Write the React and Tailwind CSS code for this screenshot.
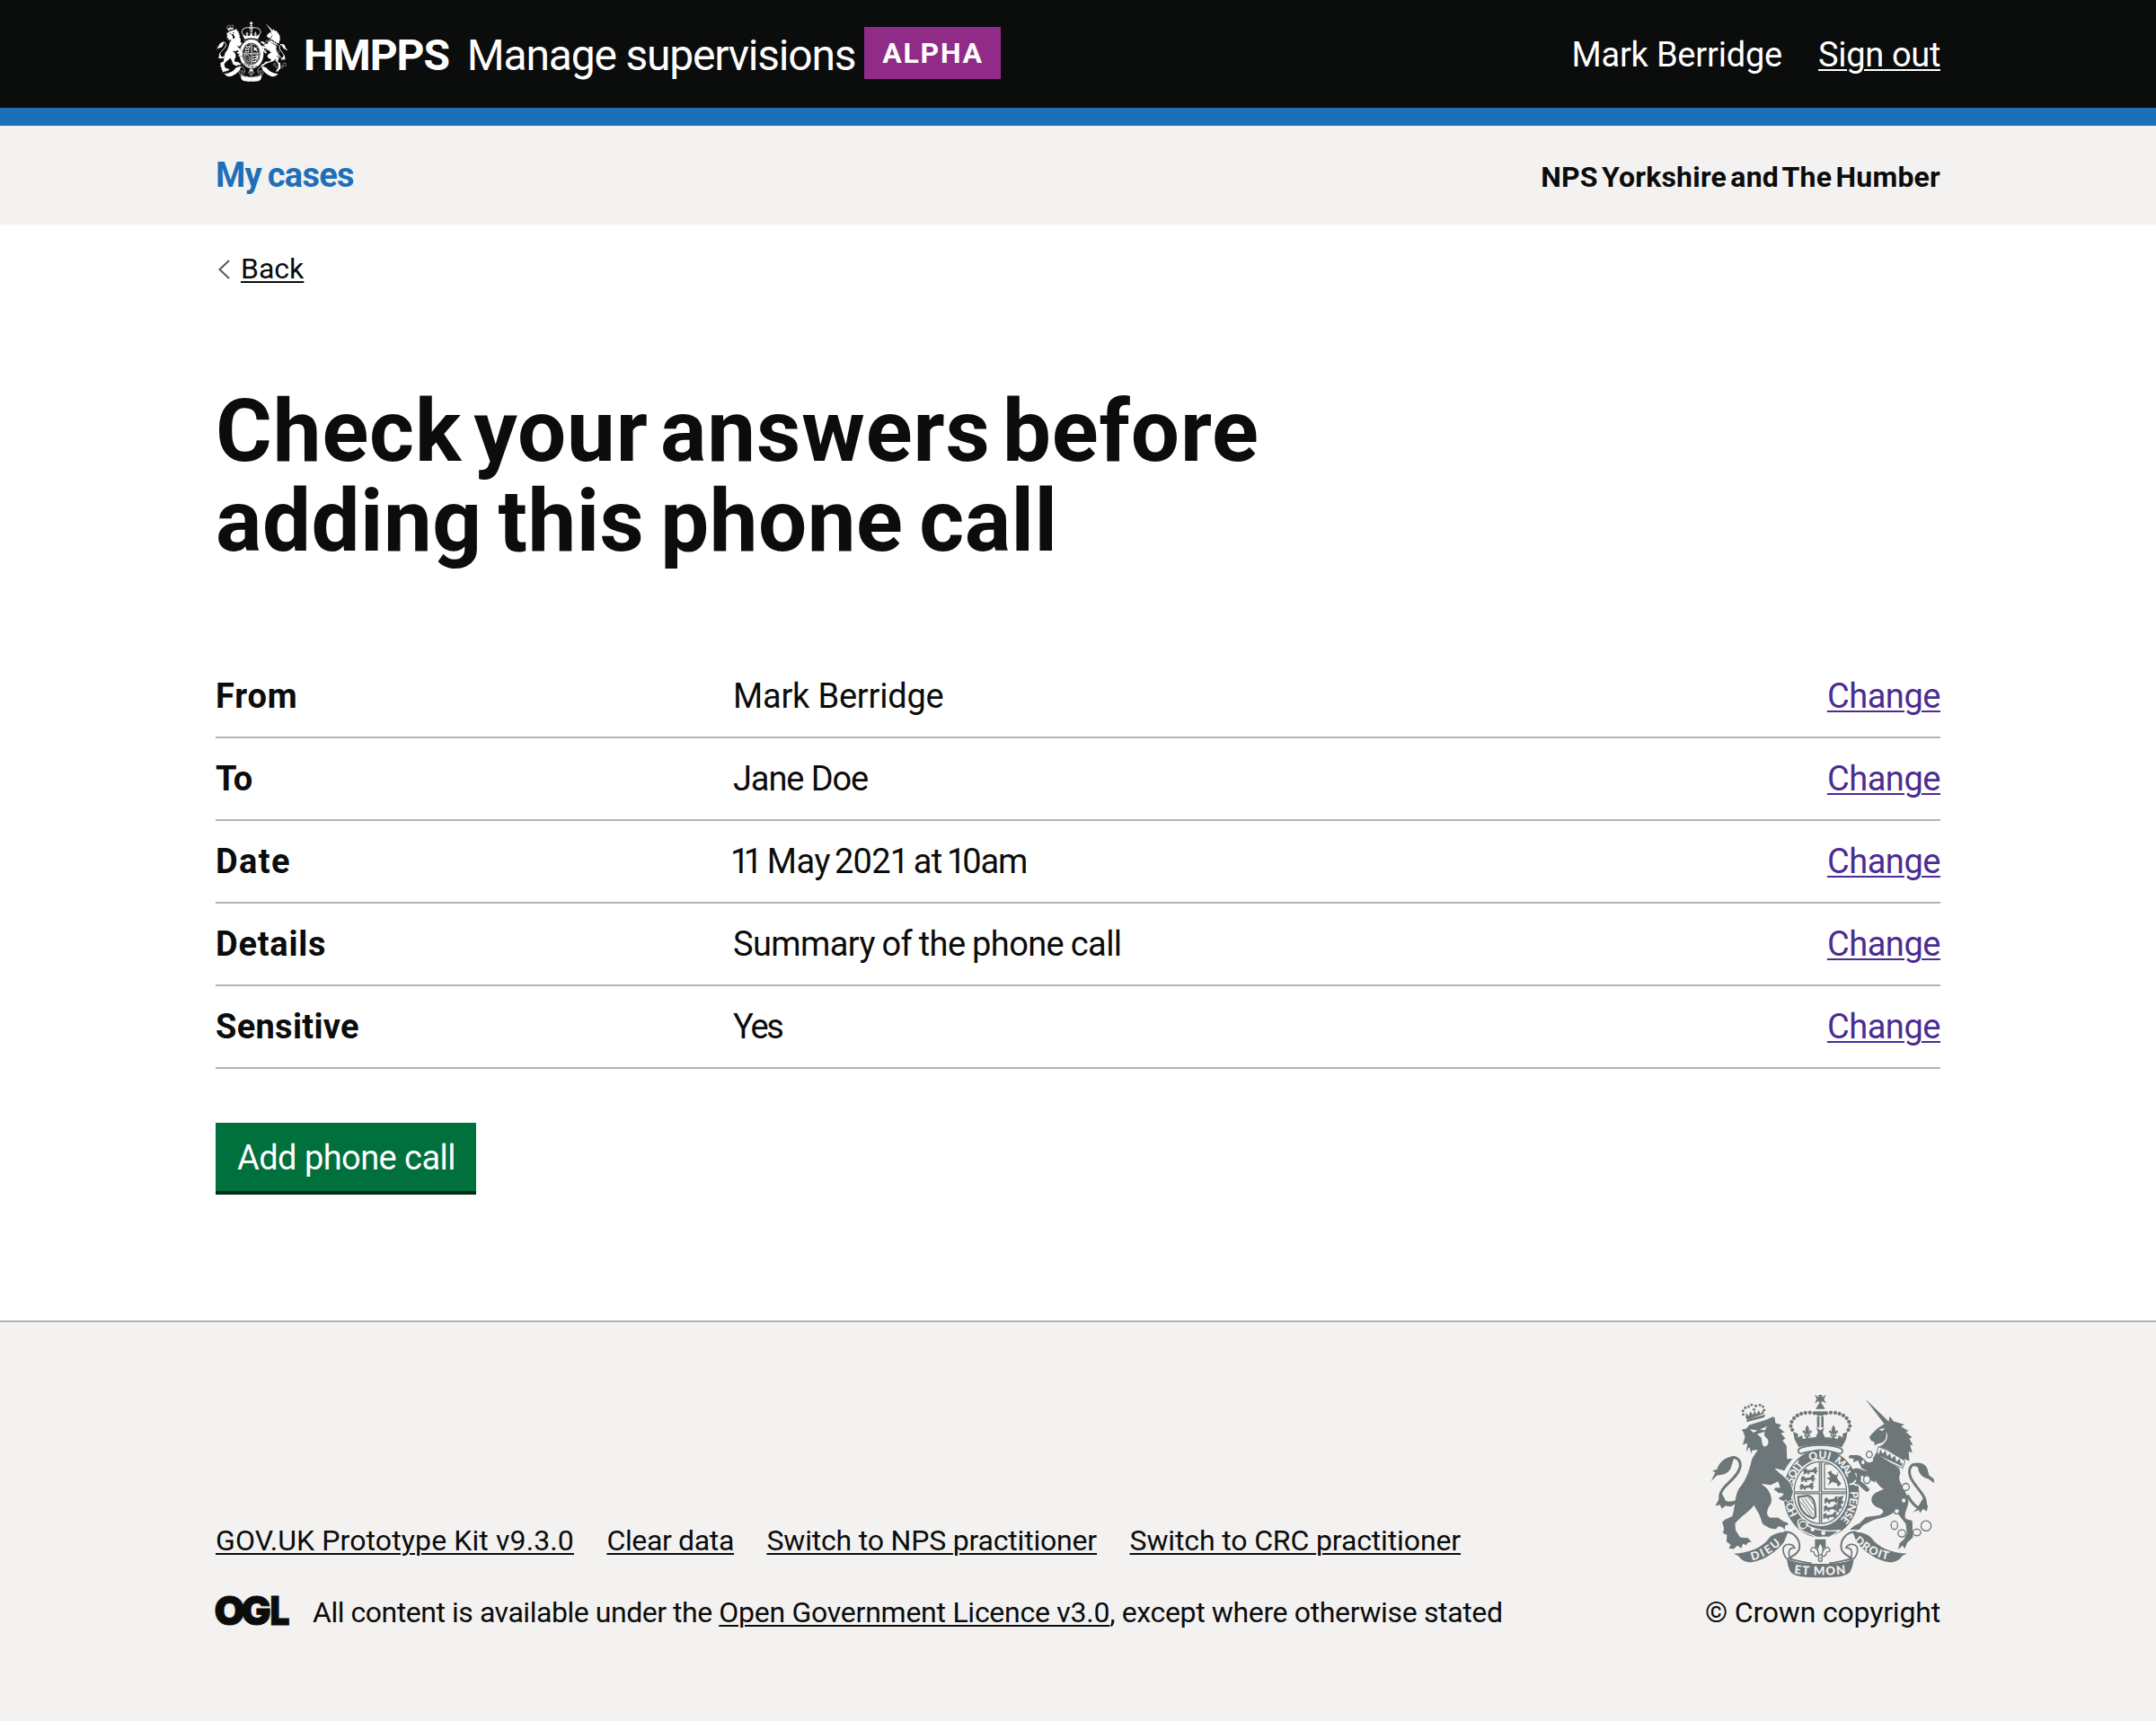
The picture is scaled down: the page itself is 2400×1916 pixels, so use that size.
const INK = "#0b0c0c";

const LION =
  "M143 152 L160 148 L170 136 L228 118 L250 108 L257 114 L259 130 L279 136 L271 147 L291 162 L278 166 L292 182 L283 190 L296 206 L298 250 L318 248 L300 272 L288 292 L258 284 C272 300 302 318 312 340 L318 362 L312 380 L314 392 L306 390 L300 398 L292 388 L286 394 L272 388 L266 380 L278 376 L284 368 L268 366 L252 354 L256 346 L272 346 L266 328 L242 340 L214 336 C240 352 250 380 244 400 C230 420 226 440 240 446 L266 446 L284 458 L300 464 L302 474 L292 474 L290 490 L280 480 L268 478 L258 488 L238 484 L214 470 C206 450 204 436 192 420 L186 408 C170 430 136 448 124 468 L126 490 L140 512 L166 514 L180 530 L166 532 L160 542 L150 536 L144 552 L130 542 L118 554 L100 552 L106 538 L92 528 L94 506 L80 500 L84 484 L78 462 L90 452 L112 442 C124 400 118 380 134 350 C160 320 168 290 178 250 L196 222 L180 224 L176 240 L170 214 L158 232 L162 200 L146 206 L154 178 L150 164 Z";

const UNICORN_HEAD =
  "M558 50 L637 126 L640 108 L654 126 L690 136 L678 142 L704 158 L694 160 L716 180 L706 182 L718 206 L708 204 L716 230 L704 226 L706 258 L692 252 L682 260 L652 240 L636 222 L604 210 C628 200 640 176 628 160 C632 186 622 196 602 200 L590 206 L588 194 L578 190 L572 178 L580 168 L600 148 L622 134 Z";

const UNICORN_BODY =
  "M598 226 L606 240 L672 282 L676 300 C662 322 692 350 702 384 C708 412 684 430 694 452 L716 458 L718 514 L700 530 L690 552 L684 540 L668 554 L674 532 L688 520 L698 500 L694 468 L660 425 C640 446 606 450 584 456 L552 472 L538 488 L506 488 L522 474 L540 466 L560 446 L606 440 C626 430 622 420 596 412 C574 400 574 376 594 364 L620 352 C600 340 590 320 578 296 C576 280 588 262 584 250 Z";

const PEARLS = [
  [388, 98], [373, 96], [358, 97], [344, 100], [331, 106], [320, 115], [312, 127], [309, 141], [314, 154],
];

const CHAIN = [
  [572, 236, 10, 11], [551, 262, 7, 9], [564, 320, 11, 13], [694, 345, 12, 12], [687, 390, 8, 9],
  [664, 426, 9, 9], [656, 473, 11, 14], [681, 500, 13, 12], [731, 497, 13, 11], [762, 475, 17, 17],
];

function Fleur({ x, y, s = 1 }) {
  return (
    <g transform={`translate(${x} ${y}) scale(${s})`}>
      <path d="M0 -22 C8 -12 8 0 3 10 L-3 10 C-8 0 -8 -12 0 -22 Z" />
      <path d="M4 8 C6 -8 18 -8 15 4 L11 2 C10 8 8 12 4 14 Z M-4 8 C-6 -8 -18 -8 -15 4 L-11 2 C-10 8 -8 12 -4 14 Z" />
      <path d="M-11 12 H11 V16 H4 V24 H-4 V16 H-11 Z" />
    </g>
  );
}

function Passant({ x, y }) {
  return (
    <path
      transform={`translate(${x} ${y})`}
      d="M0 10 L4 0 L12 -2 L14 5 L32 3 L40 -6 L48 -4 L44 2 L50 8 L44 12 L46 18 L38 16 L36 11 L20 13 L22 19 L14 18 L14 12 L6 18 L0 18 L4 12 Z"
    />
  );
}

function RibbonHalf({ paper }) {
  return (
    <g>
      <path d="M118 568 C165 566 215 548 236 516 C250 500 275 495 300 496 L286 530 C262 560 220 592 176 597 C156 598 142 588 134 576 Z" />
      <path d="M286 496 C318 492 342 520 338 550 C334 572 308 574 306 586 C330 590 350 598 378 600" fill="none" stroke="currentColor" strokeWidth="6" />
      <path d="M284 560 C280 534 312 530 322 548 C300 548 300 566 306 580 L298 586 C290 580 286 572 284 560 Z" fill={paper} stroke="currentColor" strokeWidth="5" />
      <path d="M296 586 C330 600 370 602 409 602 L409 648 C360 648 322 646 309 630 C302 618 298 604 296 586 Z" />
    </g>
  );
}

function Crest({ id, paper, motto, className }) {
  return (
    <svg viewBox="40 34 752 616" preserveAspectRatio="none" className={className} fill="currentColor" aria-hidden="true">
      <defs>
        <path id={`${id}-garter`} d="M411 482 A98 116 0 0 1 411 250 A98 116 0 0 1 411 482" />
        <path id={`${id}-left`} d="M180 591 C220 582 260 556 286 524" />
        <path id={`${id}-right`} d="M520 526 C548 558 600 586 650 590" />
        <path id={`${id}-base`} d="M320 634 Q408 646 498 634" />
        <clipPath id={`${id}-shield`}>
          <ellipse cx="408" cy="364" rx="86" ry="102" />
        </clipPath>
      </defs>

      {/* Royal crown */}
      <path d="M389 37 L404 45 L401 37 H415 L412 45 L427 37 L420 51 L427 65 L412 57 V66 H404 V57 L389 65 L396 51 Z" />
      <path d="M403 66 H413 L424 84 H392 Z" />
      <path d="M386 92 H430 C428 112 388 112 386 92 Z" />
      <path d="M397 108 H405 V146 H397 Z M411 108 H419 V146 H411 Z" />
      {PEARLS.map(([x, y]) => (
        <g key={x}>
          <circle cx={x} cy={y} r="6.3" />
          <circle cx={816 - x} cy={y} r="6.3" />
        </g>
      ))}
      <Fleur x={364} y={160} />
      <Fleur x={452} y={160} />
      <path d="M394 146 L406 154 H410 L422 146 L416 162 L424 180 H392 L400 162 Z" />
      <path d="M317 160 L334 168 L332 180 L346 172 L350 184 C380 176 436 176 466 184 L470 172 L484 180 L482 168 L499 160 L494 186 L480 212 C440 200 374 200 336 212 L322 186 Z" />
      <path d="M344 214 C376 202 440 202 472 214 C486 218 484 230 474 234 C440 220 376 220 342 234 C332 230 330 218 344 214 Z" fill={paper} stroke="currentColor" strokeWidth="5" />

      {/* Garter and shield */}
      <path d="M411 219 A127 148 0 0 1 411 515 A127 148 0 0 1 411 219 Z" />
      <ellipse cx="408" cy="364" rx="95" ry="112" fill={paper} />
      <ellipse cx="408" cy="364" rx="88" ry="104" fill="none" stroke="currentColor" strokeWidth="4" />
      <g clipPath={`url(#${id}-shield)`}>
        <path d="M403 258 H414 V470 H403 Z M318 359 H498 V369 H318 Z" />
        <path d="M408 258 V470 M318 364 H498" stroke={paper} strokeWidth="2" />
        <Passant x={350} y={284} />
        <Passant x={342} y={310} />
        <Passant x={338} y={336} />
        <path d="M422 268 H500 V352 H422 Z" fill="none" stroke="currentColor" strokeWidth="4" />
        <path d="M432 296 L444 290 L448 300 L462 306 L470 292 L464 316 L478 334 L468 344 L462 332 L448 328 L434 340 L440 322 L428 316 L442 312 Z" />
        <path d="M334 378 L366 374 C384 378 392 392 392 444 L384 450 C350 440 334 410 334 378 Z" fill="none" stroke="currentColor" strokeWidth="7" />
        <path d="M346 384 L384 440 M356 382 L386 424 M368 380 L388 406 M342 394 L376 442" stroke="currentColor" strokeWidth="3" />
        <Passant x={420} y={382} />
        <Passant x={418} y={408} />
        <Passant x={416} y={434} />
        <path d="M468 378 L486 374 L480 390 L488 396 L476 404 L482 414 L470 420 L472 430 L462 428 Z" />
      </g>
      <path d="M334 456 C352 444 372 458 364 474 C400 494 440 494 476 490 L440 512 L400 514 L352 494 C338 490 330 470 334 456 Z" stroke={paper} strokeWidth="4" />
      <circle cx="350" cy="472" r="12" fill="none" stroke={paper} strokeWidth="4" />
      <circle cx="382" cy="487" r="7" fill={paper} />
      <circle cx="418" cy="499" r="7" fill={paper} />
      {motto && (
        <g fill={paper} fontFamily="Lato, sans-serif" fontWeight="900" fontSize="36">
          <text><textPath href={`#${id}-garter`} startOffset="14%" textLength="46">HO</textPath></text>
          <text><textPath href={`#${id}-garter`} startOffset="29.5%" textLength="74">SOIT</textPath></text>
          <text><textPath href={`#${id}-garter`} startOffset="44.2%" textLength="68">QUI</textPath></text>
          <text><textPath href={`#${id}-garter`} startOffset="56.5%" textLength="70">MAL</textPath></text>
          <text><textPath href={`#${id}-garter`} startOffset="68.8%">Y</textPath></text>
          <text><textPath href={`#${id}-garter`} startOffset="74%" textLength="104">PENSE</textPath></text>
        </g>
      )}

      {/* Lion */}
      <path d={LION} stroke={paper} strokeWidth="3" />
      <path d="M172 152 L198 156 L184 163 Z M206 152 L230 142 L222 156 Z M196 168 L222 160 L220 172 L232 186 C238 200 230 210 220 210 C210 204 214 190 210 180 Z" fill={paper} />
      <path d="M160 128 L220 112 L224 102 L164 118 Z" />
      <g>
        {[[150, 102], [149, 90], [157, 80], [168, 76], [178, 70], [192, 74], [206, 71], [216, 76], [220, 88], [186, 86]].map(([x, y]) => (
          <circle key={x} cx={x} cy={y} r="4.5" />
        ))}
        <path d="M158 112 L160 96 L168 108 L174 92 L182 104 L188 90 L194 102 L202 88 L208 100 L218 86 L218 100 L162 120 Z" />
      </g>
      <path d="M132 392 C104 402 72 402 72 378 C72 340 132 320 140 276 C142 250 120 240 104 250" fill="none" stroke="currentColor" strokeWidth="9" />
      <path d="M122 244 C96 240 70 258 62 286 L46 292 L56 296 L42 326 L62 306 C84 304 104 300 110 276 L116 256 Z" />
      <path d="M76 362 L66 390 L56 408 L72 404 L78 418 L90 408 L110 410 L126 398 L92 392 Z" />

      {/* Unicorn */}
      <path d="M590 254 C560 280 556 240 532 238 L506 238 L502 248 L520 250 L518 262 L534 256 L546 282 L586 304 Z" />
      <path d="M590 288 C556 300 548 282 528 282 L508 288 L512 310 L518 296 L530 300 L528 326 L546 348 L564 362 L574 354 L560 338 L544 326 L544 306 L592 330 Z" />
      <path d={UNICORN_HEAD} />
      <path d="M604 152 L624 148 L616 158 Z" fill={paper} />
      <path d="M602 210 L640 226 L692 258 L684 282 L640 264 L596 238 Z" fill={paper} stroke="currentColor" strokeWidth="3" />
      <path d="M604 234 L610 218 L616 234 L626 224 L632 242 L642 232 L646 250 L658 240 L662 260 L674 250 L678 268 L684 262 L682 276 L602 238 Z" />
      <path d={UNICORN_BODY} />
      <path d="M700 372 C716 404 744 430 758 408 C772 376 716 340 708 306 C702 280 714 266 732 270" fill="none" stroke="currentColor" strokeWidth="9" />
      <path d="M712 272 C730 258 762 262 768 290 L772 306 L788 318 L790 332 L770 318 C748 312 738 300 734 278 Z" />
      <path d="M756 376 L768 410 L764 426 L752 418 L742 432 L738 422 L718 430 L732 416 Z" />
      {CHAIN.map(([x, y, rx, ry]) => (
        <ellipse key={x} cx={x} cy={y} rx={rx} ry={ry} fill={paper} stroke="currentColor" strokeWidth="4" />
      ))}

      {/* Ribbon */}
      <RibbonHalf paper={paper} />
      <g transform="translate(816 0) scale(-1 1)">
        <RibbonHalf paper={paper} />
      </g>
      <path d="M390 520 H426 V548 H390 Z" />
      <g fill={paper} stroke="currentColor" strokeWidth="4">
        <path d="M408 532 C420 546 418 562 412 572 H404 C398 562 396 546 408 532 Z" />
        <path d="M414 572 C414 548 440 536 440 560 L430 562 C428 574 422 578 414 578 Z M402 572 C402 548 376 536 376 560 L386 562 C388 574 394 578 402 578 Z" />
        <circle cx="408" cy="588" r="6" />
      </g>
      {motto && (
        <g fill={paper} fontFamily="Lato, sans-serif" fontWeight="900" fontSize="38">
          <text><textPath href={`#${id}-left`} textLength="112">DIEU</textPath></text>
          <text><textPath href={`#${id}-right`} textLength="132">DROIT</textPath></text>
          <text fontSize="40"><textPath href={`#${id}-base`} textLength="174">ET MON</textPath></text>
        </g>
      )}
    </svg>
  );
}

const LINK = "underline decoration-2 underline-offset-[3px]";

const ROWS = [
  { label: "From", labelClass: "tracking-[0.9px]", value: <span className="tracking-[-0.2px]">Mark Berridge</span> },
  { label: "To", labelClass: "tracking-[-0.5px]", value: <span className="tracking-[-1.1px]">Jane Doe</span> },
  {
    label: "Date",
    labelClass: "tracking-[1.4px]",
    value: (
      <span className="tracking-[-0.5px] [word-spacing:-3.8px]">
        <span className="ml-[-3px] tracking-[-6.5px]">1</span>1 May <span className="tracking-[-0.8px]">202</span>1 at <span className="tracking-[-4px]">1</span><span className="tracking-[-1.2px]">0am</span>
      </span>
    ),
  },
  { label: "Details", labelClass: "tracking-[0.75px]", value: <span className="tracking-[-0.6px] [word-spacing:-1.2px]">Summary of the phone call</span> },
  { label: "Sensitive", labelClass: "tracking-[0.3px]", value: <span className="tracking-[-2.2px]">Yes</span> },
];

function Header() {
  return (
    <header className="h-[140px] border-b-[20px] border-[#1d70b8] bg-[#0b0c0c] text-white">
      <div className="mx-auto flex h-[120px] w-[1920px] items-start justify-between">
        <div className="flex items-start">
          <Crest id="header-crest" paper={INK} className="mt-6 ml-px h-[67px] w-[79px]" />
          <span className="mt-8 ml-[18px] text-5xl leading-[60px] font-bold tracking-[-1.1px]">HMPPS</span>
          <span className="mt-8 ml-[20px] text-5xl leading-[60px] tracking-[-1.2px]">Manage supervisions</span>
          <span className="mt-[30px] ml-2.5 h-[58px] w-[152px] bg-[#912b88] pl-5 text-[32px] leading-[58px] font-bold tracking-[1.7px]">ALPHA</span>
        </div>
        <div className="mt-9 flex gap-10 text-[38px] leading-[50px]">
          <span className="tracking-[-0.2px]">Mark Berridge</span>
          <a href="#" className={`${LINK} tracking-[-0.33px]`}>Sign out</a>
        </div>
      </div>
    </header>
  );
}

function Footer() {
  return (
    <footer className="h-[446px] border-t-2 border-[#b1b4b6] bg-[#f3f2f1] text-[32px] leading-10">
      <div className="mx-auto flex w-[1920px] justify-between">
        <div className="pt-[223px]">
          <div className="flex gap-[36.5px]">
            <a href="#" className={`${LINK} tracking-[0.11px]`}>GOV.UK Prototype Kit v9.3.0</a>
            <a href="#" className={`${LINK} tracking-[-0.36px]`}>Clear data</a>
            <a href="#" className={`${LINK} tracking-[-0.19px]`}>Switch to NPS practitioner</a>
            <a href="#" className={`${LINK} tracking-[-0.13px]`}>Switch to CRC practitioner</a>
          </div>
          <div className="mt-10 flex items-start">
            <svg width="82" height="34" viewBox="0 0 82 34" className="mt-px mr-[26px] overflow-visible" role="img" aria-label="OGL">
              <text y="33" fontFamily="Inter, sans-serif" fontWeight="900" fontSize="44" fill={INK} stroke={INK} strokeWidth="1">
                <tspan x="-1.5">O</tspan>
                <tspan x="28.5">G</tspan>
                <tspan x="60.5" textLength="22" lengthAdjust="spacingAndGlyphs">L</tspan>
              </text>
            </svg>
            <p className="whitespace-pre">
              <span className="tracking-[-0.46px]">All content is available under the </span>
              <a href="#" className={`${LINK} tracking-[-0.26px]`}>Open Government Licence v3.0</a>
              <span className="tracking-[-0.36px]">, except where otherwise stated</span>
            </p>
          </div>
        </div>
        <div className="flex flex-col items-end pt-[80px]">
          <Crest id="footer-crest" paper="#f3f2f1" motto className="mr-1.5 h-[205px] w-[250px] text-[#6d7779]" />
          <a href="#" className="mt-[18px] tracking-[-0.18px]">© Crown copyright</a>
        </div>
      </div>
    </footer>
  );
}

export default function App() {
  return (
    <div className="min-h-[1916px] bg-white font-[Roboto,sans-serif] text-[#0b0c0c]">
      <Header />
      <nav className="h-[110px] bg-[#f3f2f1]">
        <div className="mx-auto flex h-[110px] w-[1920px] items-center justify-between font-bold">
          <a href="#" className="text-[38px] leading-[50px] tracking-[-0.7px] text-[#1d70b8] [word-spacing:-2px]">My cases</a>
          <span className="mt-1 text-[32px] leading-10 tracking-[0.2px] [word-spacing:-3.8px]">NPS Yorkshire and The Humber</span>
        </div>
      </nav>
      <main className="mx-auto h-[1220px] w-[1920px] pt-[29px]">
        <a href="#" className="flex items-center text-[32px] leading-10">
          <svg width="13" height="22" viewBox="0 0 13 22" className="mt-0.5 mr-3 ml-[3px]" fill="none" stroke="#505a5f" strokeWidth="2">
            <path d="M12 1 L1.5 11 L12 21" />
          </svg>
          <span className={LINK}>Back</span>
        </a>
        <h1 className="mt-[111px] text-[96px] leading-[100px] font-bold">
          <span className="block tracking-[0.9px] [word-spacing:-11.5px]">Check your answers before</span>
          <span className="block tracking-[0.5px] [word-spacing:-6.5px]">adding this phone call</span>
        </h1>
        <dl className="mt-[100px] text-[38px] leading-[50px]">
          {ROWS.map((row) => (
            <div key={row.label} className="flex border-b-2 border-[#b1b4b6] py-5">
              <dt className="w-[576px] font-bold"><span className={row.labelClass}>{row.label}</span></dt>
              <dd className="flex-1">{row.value}</dd>
              <dd><a href="#" className={`${LINK} tracking-[-0.45px] text-[#4c2c92]`}>Change</a></dd>
            </div>
          ))}
        </dl>
        <button className="mt-[60px] block h-20 w-[290px] border-b-4 border-[#002d18] bg-[#00703c] pt-px pl-6 text-left text-[38px] leading-[76px] tracking-[-0.55px] text-white">
          Add phone call
        </button>
      </main>
      <Footer />
    </div>
  );
}
